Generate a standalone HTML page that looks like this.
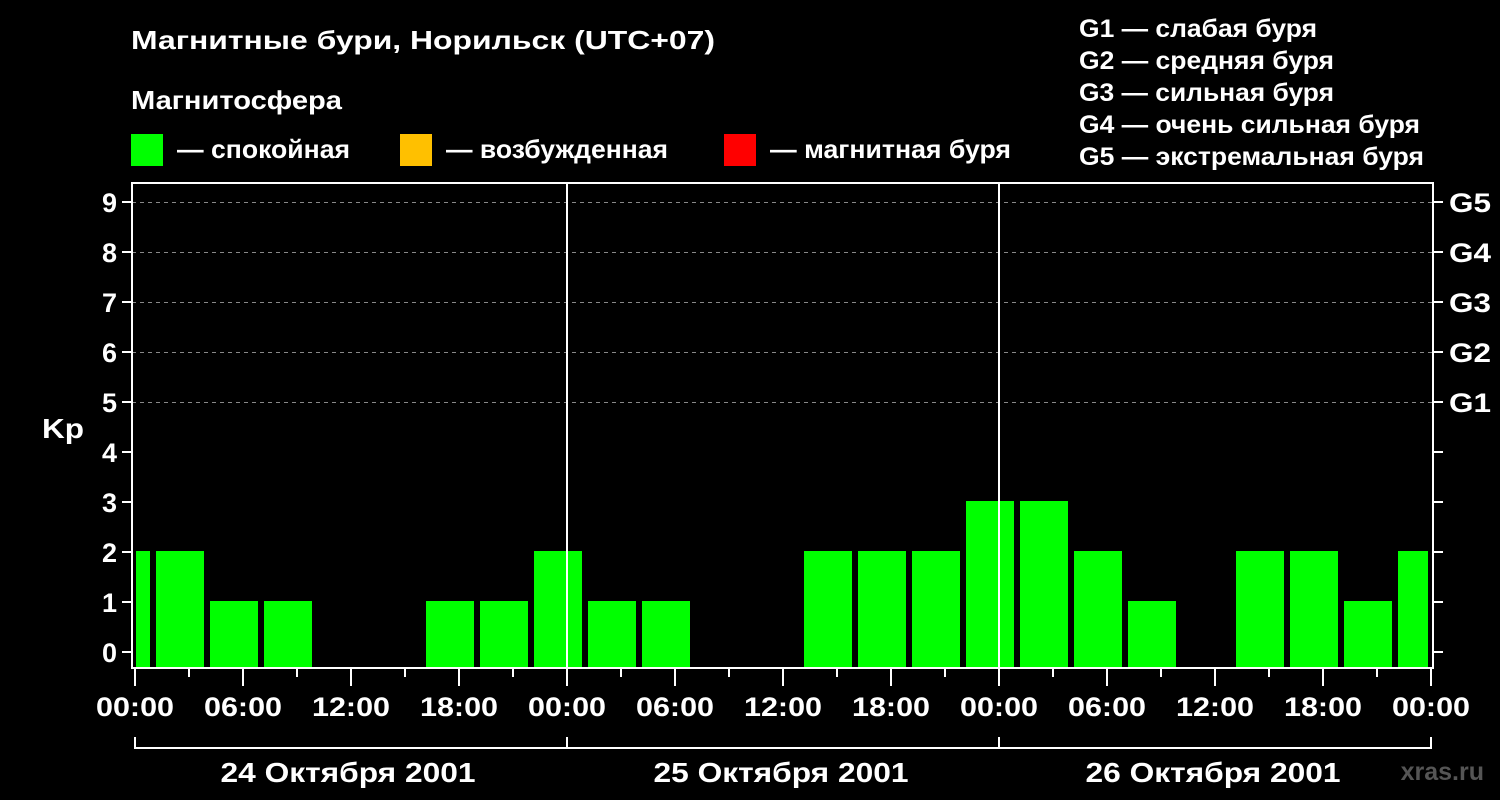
<!DOCTYPE html>
<html><head><meta charset="utf-8"><style>
html,body{margin:0;padding:0;background:#000;width:1500px;height:800px;overflow:hidden}
svg{display:block}
text{font-family:"Liberation Sans",Arial,sans-serif;font-weight:bold;fill:#fff}
</style></head><body>
<svg width="1500" height="800" viewBox="0 0 1500 800">
<rect width="1500" height="800" fill="#000"/>
<text x="131" y="49" font-size="26" textLength="584" lengthAdjust="spacingAndGlyphs">Магнитные бури, Норильск (UTC+07)</text>
<text x="131" y="109" font-size="26" textLength="211" lengthAdjust="spacingAndGlyphs">Магнитосфера</text>
<rect x="131" y="134" width="32" height="32" fill="#00ff00"/>
<text x="177" y="158" font-size="26" textLength="173" lengthAdjust="spacingAndGlyphs">— спокойная</text>
<rect x="400" y="134" width="32" height="32" fill="#ffc000"/>
<text x="446" y="158" font-size="26" textLength="222" lengthAdjust="spacingAndGlyphs">— возбужденная</text>
<rect x="724" y="134" width="32" height="32" fill="#ff0000"/>
<text x="770" y="158" font-size="26" textLength="241" lengthAdjust="spacingAndGlyphs">— магнитная буря</text>
<g font-size="25">
<text x="1079" y="37" textLength="238" lengthAdjust="spacingAndGlyphs">G1 — слабая буря</text>
<text x="1079" y="69" textLength="255" lengthAdjust="spacingAndGlyphs">G2 — средняя буря</text>
<text x="1079" y="101" textLength="255" lengthAdjust="spacingAndGlyphs">G3 — сильная буря</text>
<text x="1079" y="133" textLength="341" lengthAdjust="spacingAndGlyphs">G4 — очень сильная буря</text>
<text x="1079" y="165" textLength="345" lengthAdjust="spacingAndGlyphs">G5 — экстремальная буря</text>
</g>
<g stroke="#888" stroke-dasharray="4,4" stroke-width="1">
<line x1="132" y1="202.5" x2="1433" y2="202.5"/>
<line x1="132" y1="252.5" x2="1433" y2="252.5"/>
<line x1="132" y1="302.5" x2="1433" y2="302.5"/>
<line x1="132" y1="352.5" x2="1433" y2="352.5"/>
<line x1="132" y1="402.5" x2="1433" y2="402.5"/>
</g>
<g fill="#00ff00">
<rect x="136" y="551" width="14" height="117"/>
<rect x="156" y="551" width="48" height="117"/>
<rect x="210" y="601" width="48" height="67"/>
<rect x="264" y="601" width="48" height="67"/>
<rect x="426" y="601" width="48" height="67"/>
<rect x="480" y="601" width="48" height="67"/>
<rect x="534" y="551" width="48" height="117"/>
<rect x="588" y="601" width="48" height="67"/>
<rect x="642" y="601" width="48" height="67"/>
<rect x="804" y="551" width="48" height="117"/>
<rect x="858" y="551" width="48" height="117"/>
<rect x="912" y="551" width="48" height="117"/>
<rect x="966" y="501" width="48" height="167"/>
<rect x="1020" y="501" width="48" height="167"/>
<rect x="1074" y="551" width="48" height="117"/>
<rect x="1128" y="601" width="48" height="67"/>
<rect x="1236" y="551" width="48" height="117"/>
<rect x="1290" y="551" width="48" height="117"/>
<rect x="1344" y="601" width="48" height="67"/>
<rect x="1398" y="551" width="30" height="117"/>
</g>
<g stroke="#fff" stroke-width="2" fill="none">
<rect x="132" y="183" width="1301" height="485"/>
<line x1="567" y1="183" x2="567" y2="668"/>
<line x1="999" y1="183" x2="999" y2="668"/>
<path d="M122 202H132M122 252H132M122 302H132M122 352H132M122 402H132M122 452H132M122 502H132M122 552H132M122 602H132M122 652H132"/>
<path d="M1433 202H1443M1433 252H1443M1433 302H1443M1433 352H1443M1433 402H1443M1433 452H1443M1433 502H1443M1433 552H1443M1433 602H1443M1433 652H1443"/>
<path d="M135 668V686M189 668V677M243 668V686M297 668V677M351 668V686M405 668V677M459 668V686M513 668V677M567 668V686M621 668V677M675 668V686M729 668V677M783 668V686M837 668V677M891 668V686M945 668V677M999 668V686M1053 668V677M1107 668V686M1161 668V677M1215 668V686M1269 668V677M1323 668V686M1377 668V677M1431 668V686"/>
<path d="M135 737V748H1431V737M567 737V748M999 737V748"/>
</g>
<g font-size="27" text-anchor="end">
<text x="117" y="212">9</text><text x="117" y="262">8</text><text x="117" y="312">7</text>
<text x="117" y="362">6</text><text x="117" y="412">5</text><text x="117" y="462">4</text>
<text x="117" y="512">3</text><text x="117" y="562">2</text><text x="117" y="612">1</text>
<text x="117" y="662">0</text>
</g>
<text x="42" y="438" font-size="28" textLength="42" lengthAdjust="spacingAndGlyphs">Kp</text>
<g font-size="27">
<text x="1449" y="212" textLength="42" lengthAdjust="spacingAndGlyphs">G5</text>
<text x="1449" y="262" textLength="42" lengthAdjust="spacingAndGlyphs">G4</text>
<text x="1449" y="312" textLength="42" lengthAdjust="spacingAndGlyphs">G3</text>
<text x="1449" y="362" textLength="42" lengthAdjust="spacingAndGlyphs">G2</text>
<text x="1449" y="412" textLength="42" lengthAdjust="spacingAndGlyphs">G1</text>
</g>
<g font-size="27" text-anchor="middle">
<text x="135" y="716" textLength="78" lengthAdjust="spacingAndGlyphs">00:00</text>
<text x="243" y="716" textLength="78" lengthAdjust="spacingAndGlyphs">06:00</text>
<text x="351" y="716" textLength="78" lengthAdjust="spacingAndGlyphs">12:00</text>
<text x="459" y="716" textLength="78" lengthAdjust="spacingAndGlyphs">18:00</text>
<text x="567" y="716" textLength="78" lengthAdjust="spacingAndGlyphs">00:00</text>
<text x="675" y="716" textLength="78" lengthAdjust="spacingAndGlyphs">06:00</text>
<text x="783" y="716" textLength="78" lengthAdjust="spacingAndGlyphs">12:00</text>
<text x="891" y="716" textLength="78" lengthAdjust="spacingAndGlyphs">18:00</text>
<text x="999" y="716" textLength="78" lengthAdjust="spacingAndGlyphs">00:00</text>
<text x="1107" y="716" textLength="78" lengthAdjust="spacingAndGlyphs">06:00</text>
<text x="1215" y="716" textLength="78" lengthAdjust="spacingAndGlyphs">12:00</text>
<text x="1323" y="716" textLength="78" lengthAdjust="spacingAndGlyphs">18:00</text>
<text x="1431" y="716" textLength="78" lengthAdjust="spacingAndGlyphs">00:00</text>
<text x="348" y="782" font-size="28" textLength="255" lengthAdjust="spacingAndGlyphs">24 Октября 2001</text>
<text x="781" y="782" font-size="28" textLength="255" lengthAdjust="spacingAndGlyphs">25 Октября 2001</text>
<text x="1213" y="782" font-size="28" textLength="255" lengthAdjust="spacingAndGlyphs">26 Октября 2001</text>
</g>
<text x="1484" y="780" font-size="25" text-anchor="end" style="fill:#555">xras.ru</text>
</svg>
</body></html>
